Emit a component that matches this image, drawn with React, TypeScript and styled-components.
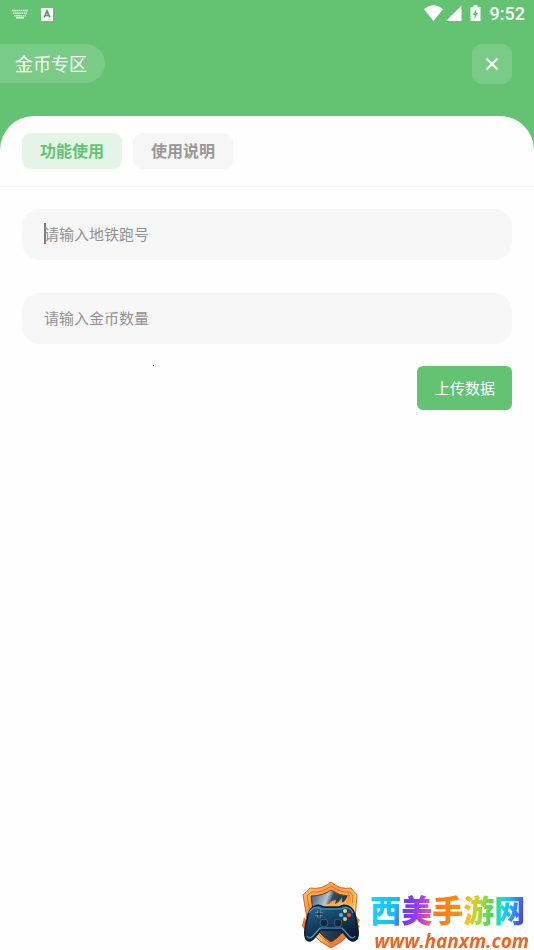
import React, { useState } from "react";
import styled, { createGlobalStyle } from "styled-components";

const GlobalStyle = createGlobalStyle`
  * { box-sizing: border-box; }
  body {
    margin: 0;
    background: #fefefe;
    font-family: Roboto, "Noto Sans CJK SC", sans-serif;
  }
  button, input { font: inherit; }
`;

const Page = styled.div`
  display: flex;
  flex-direction: column;
  min-height: 100vh;
  background: #63c373;
`;

const StatusBar = styled.div`
  display: flex;
  align-items: center;
  justify-content: space-between;
  height: 28px;
  padding: 0 9px 0 12px;
  color: #fff;
`;

const StatusGroup = styled.div<{ $gap: number }>`
  display: flex;
  align-items: center;
  gap: ${(p) => p.$gap}px;
`;

const Clock = styled.time`
  margin-left: 6px;
  font-size: 18px;
  font-weight: 500;
  line-height: 28px;
`;

const Header = styled.header`
  display: flex;
  align-items: flex-start;
  justify-content: space-between;
  padding: 16px 22px 32px 0;
`;

const Title = styled.h1`
  margin: 0;
  padding: 2px 18px 0 15px;
  border-radius: 0 20px 20px 0;
  background: #7acb87;
  color: #fff;
  font-size: 18px;
  font-weight: 400;
  line-height: 37px;
`;

const CloseButton = styled.button`
  display: flex;
  align-items: center;
  justify-content: center;
  width: 40px;
  height: 40px;
  padding: 0;
  border: 0;
  border-radius: 11px;
  background: #7acb87;
  color: #fff;
`;

const Panel = styled.main`
  flex: 1;
  border-radius: 34px 34px 0 0;
  background: #fefefe;
`;

const Tabs = styled.div`
  display: flex;
  gap: 11px;
  padding: 17px 22px;
  border-bottom: 1px solid #f3f3f3;
`;

const Tab = styled.button<{ $active: boolean }>`
  height: 36px;
  padding: 2px 18px 0;
  border: 0;
  border-radius: 9px;
  background: ${(p) => (p.$active ? "#e4f4e6" : "#f6f6f6")};
  color: ${(p) => (p.$active ? "#63c373" : "#989898")};
  font-size: 16px;
  font-weight: 700;
  line-height: 34px;
`;

const Form = styled.form`
  display: flex;
  flex-direction: column;
  padding: 22px;
`;

const Field = styled.label<{ $focused?: boolean }>`
  position: relative;
  display: block;
  margin-bottom: ${(p) => (p.$focused ? 33 : 22)}px;

  &::after {
    content: "";
    display: ${(p) => (p.$focused ? "block" : "none")};
    position: absolute;
    left: 22px;
    top: 14px;
    width: 2px;
    height: 21px;
    background: #808080;
  }
`;

const Input = styled.input`
  display: block;
  width: 100%;
  height: 51px;
  padding: 0 22px;
  border: 0;
  border-radius: 18px;
  outline: 0;
  background: #f7f7f7;
  color: #444;
  font-size: 15px;

  &::placeholder { color: #929292; opacity: 1; }
`;

const Actions = styled.div`
  position: relative;
  display: flex;
  justify-content: flex-end;
`;

const Pointer = styled.i`
  position: absolute;
  left: 131px;
  top: -1px;
  width: 1px;
  height: 1px;
  background: #222;
`;

const Submit = styled.button`
  height: 44px;
  padding: 0 17px 2px 18px;
  border: 0;
  border-radius: 6px;
  background: #63c373;
  color: #fff;
  font-size: 15px;
`;

const SiteMark = styled.a`
  position: fixed;
  right: 5px;
  bottom: 0;
  display: flex;
  align-items: flex-end;
  gap: 9px;
  text-decoration: none;
`;

const SiteText = styled.span`
  display: flex;
  flex-direction: column;
`;

const SiteName = styled.span`
  align-self: flex-start;
  background: linear-gradient(
    100deg,
    #16d9ff 0%, #16bdf5 18%, #673df0 23%, #a63bec 33%, #e4569b 39%,
    #ff7a12 43%, #ff8a12 57%, #ffc01c 63%, #a6dc35 70%, #45d565 78%,
    #17dcec 84%, #2a9cf4 90%, #5b35d5 98%
  );
  background-clip: text;
  -webkit-background-clip: text;
  color: transparent;
  font-family: "Noto Sans CJK SC", sans-serif;
  font-size: 31px;
  font-weight: 900;
  line-height: 46px;
`;

const SiteUrl = styled.span`
  padding-left: 4px;
  color: #ee661f;
  font-family: "Open Sans", sans-serif;
  font-size: 19px;
  font-style: italic;
  font-weight: 700;
  line-height: 18px;
`;

const KeyboardIcon = () => (
  <svg width="16" height="10" viewBox="0 0 16 10" fill="none" stroke="#fff" strokeWidth="1.5" aria-hidden="true">
    <path d="M0 1.500h16M1 4.200h14M2 6.700h12" strokeDasharray="1.6 .6" opacity=".9" />
    <path d="M4 8.700h8" />
  </svg>
);

const LetterBadgeIcon = () => (
  <svg width="12" height="13" viewBox="0 0 12 13" aria-hidden="true">
    <path fill="#fff" d="M0 0h12v13H0z" />
    <path d="M3.200 9.500 6 3l2.800 6.500M4.200 7.500h3.600" fill="none" stroke="#4f9a60" strokeWidth="1.700" />
    <path d="M6.500 11.600h4" stroke="#a9d9b1" strokeWidth=".8" />
  </svg>
);

const SignalIcons = () => (
  <svg width="58" height="18" viewBox="0 0 58 18" aria-hidden="true">
    <path fill="#fff" d="M0 4.300Q9.500-3.800 19 4.300L9.500 16zM37.500.500V16H22zM46.500 2h3V0h4v2h3v14h-10z" />
    <path fill="#63c373" d="M52.600 3.500 48.600 10h2.300l-.8 4.500 4.300-6.700H52z" />
  </svg>
);

const CloseIcon = () => (
  <svg width="14" height="14" viewBox="0 0 14 14" fill="none" stroke="currentColor" strokeWidth="2" aria-hidden="true">
    <path d="m1.500 1.500 11 11M12.500 1.500l-11 11" />
  </svg>
);

const ShieldLogo = () => (
  <svg width="60" height="69" viewBox="0 0 60 69" aria-hidden="true">
    <defs>
      <linearGradient id="rim" x1="0" y1="0" x2=".6" y2="1">
        <stop offset="0" stopColor="#ffc878" />
        <stop offset=".35" stopColor="#f79a3c" />
        <stop offset=".7" stopColor="#ffd674" />
        <stop offset="1" stopColor="#f46a20" />
      </linearGradient>
      <linearGradient id="plate" x1="0" y1="0" x2="1" y2=".5">
        <stop offset="0" stopColor="#34536e" />
        <stop offset=".4" stopColor="#b4c5d2" />
        <stop offset=".52" stopColor="#33495d" />
        <stop offset="1" stopColor="#1a2a3d" />
      </linearGradient>
      <linearGradient id="fire" x1="0" y1="0" x2="0" y2="1">
        <stop offset="0" stopColor="#f9771e" />
        <stop offset="1" stopColor="#ffdb62" />
      </linearGradient>
      <linearGradient id="pad" x1="0" y1="0" x2=".5" y2="1">
        <stop offset="0" stopColor="#2b6d9c" />
        <stop offset=".45" stopColor="#174468" />
        <stop offset="1" stopColor="#0a1b30" />
      </linearGradient>
    </defs>
    <path fill="#f57528" d="M54 30q0 6 5 9l-3 5 3 1-8 9-6-8zM3 36l-2 9 7 10 4-6z" />
    <path fill="url(#rim)" stroke="#b4501f" strokeWidth=".8" d="M30 1Q39 9 50 7l6 7-2 24q-1 17-24 29Q8 56 6 38L2 14l7-7Q21 9 30 1z" />
    <path fill="none" stroke="#e56a22" strokeWidth="1" d="M30 5q9 7 19 6l3 4-2 22q-1 15-20 26Q11 52 10 37L6 15l4-4q12 1 20-6z" />
    <path fill="url(#plate)" stroke="#6b351d" strokeWidth="1" d="M30 9q8 6 18 6l-1 23q-1 14-17 23Q14 52 13 37L10 15q12 0 20-6z" />
    <path fill="url(#fire)" d="M17 28q5-5 11-5 3-4 7-4l-1 4q5-2 7-7v6q6-4 6-11 5 6 2 12l5-3q-4 6-2 12l-35 1z" />
    <path fill="#ffe27a" d="M25 29q7-1 10-4l1 2 6-6-1 6 6-3-3 6z" />
    <path fill="url(#pad)" stroke="#07182d" strokeWidth="1.500" d="M14 25q5-2 8 1h16q4-3 9-1 6 2 8 13 4 16 1 20-5 5-10-2l-6-7H20l-6 7q-5 7-9 2-3-4 1-20 2-11 8-13z" />
    <path fill="none" stroke="#3b9fca" strokeWidth="1.200" d="M8 32q4-8 12-4h20q9-4 12 4M6 55q2 4 6 0l7-8h22l7 8q4 4 6 0" />
    <path fill="none" stroke="#8aa2b6" strokeWidth="3" d="M18 29v8M14 33h8" />
    <path fill="none" stroke="#142c43" strokeWidth="1.300" d="M18 29v8M14 33h8" />
    <circle cx="23" cy="42" r="4" fill="#17283a" stroke="#2f638a" />
    <circle cx="37" cy="42" r="4" fill="#17283a" stroke="#2f638a" />
    <circle cx="44" cy="30" r="2" fill="#ffd54c" />
    <circle cx="40" cy="34" r="2" fill="#41bdf0" />
    <circle cx="48" cy="34" r="2" fill="#f04b43" />
    <circle cx="44" cy="38" r="2" fill="#f3c631" />
  </svg>
);

const tabs = ["功能使用", "使用说明"];

export default function App() {
  const [active, setActive] = useState(0);

  return (
    <Page>
      <GlobalStyle />
      <StatusBar>
        <StatusGroup $gap={13}>
          <KeyboardIcon />
          <LetterBadgeIcon />
        </StatusGroup>
        <StatusGroup $gap={2}>
          <SignalIcons />
          <Clock>9:52</Clock>
        </StatusGroup>
      </StatusBar>
      <Header>
        <Title>金币专区</Title>
        <CloseButton type="button" aria-label="关闭">
          <CloseIcon />
        </CloseButton>
      </Header>
      <Panel>
        <Tabs role="tablist">
          {tabs.map((label, i) => (
            <Tab
              key={label}
              type="button"
              role="tab"
              aria-selected={active === i}
              $active={active === i}
              onClick={() => setActive(i)}
            >
              {label}
            </Tab>
          ))}
        </Tabs>
        <Form onSubmit={(e) => e.preventDefault()}>
          <Field $focused>
            <Input aria-label="地铁跑号" placeholder="请输入地铁跑号" />
          </Field>
          <Field>
            <Input aria-label="金币数量" placeholder="请输入金币数量" />
          </Field>
          <Actions>
            <Pointer />
            <Submit type="submit">上传数据</Submit>
          </Actions>
        </Form>
      </Panel>
      <SiteMark href="#">
        <ShieldLogo />
        <SiteText>
          <SiteName>西美手游网</SiteName>
          <SiteUrl>www.hanxm.com</SiteUrl>
        </SiteText>
      </SiteMark>
    </Page>
  );
}
